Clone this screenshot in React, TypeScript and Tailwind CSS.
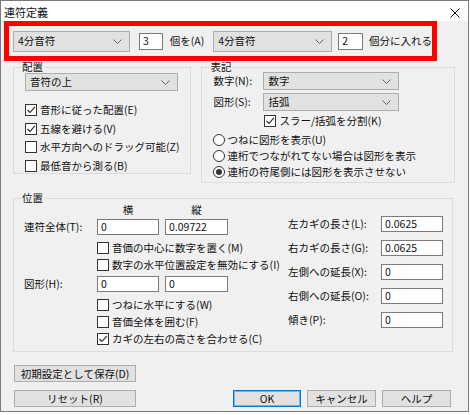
import React from 'react'

const FONT = "font-['Noto_Sans_CJK_JP','Noto_Sans',sans-serif]"

function Chevron() {
  return (
    <svg width="9" height="5" viewBox="0 0 9 5" className="shrink-0">
      <polyline points="0.5,0.5 4.5,4.5 8.5,0.5" fill="none" stroke="#606060" strokeWidth="1" />
    </svg>
  )
}

function Select({ label, w, h = 'h-[18px]' }: { label: string; w: string; h?: string }) {
  return (
    <div className={`${w} ${h} shrink-0 flex items-center justify-between pl-[4px] pr-[7px] bg-[#e1e1e1] border border-[#adadad]`}>
      <span>{label}</span>
      <Chevron />
    </div>
  )
}

function Field({ value, w, ml = '' }: { value: string; w: string; ml?: string }) {
  return (
    <div className={`${w} ${ml} h-[16px] shrink-0 flex items-center pl-[3px] bg-white border border-[#7a7a7a]`}>
      {value}
    </div>
  )
}

function Check({ label, on = false, h = 'h-[18.5px]', ml = '' }: { label: string; on?: boolean; h?: string; ml?: string }) {
  return (
    <div className={`${h} ${ml} flex items-center gap-[3px] whitespace-nowrap`}>
      <div className="w-[12px] h-[12px] shrink-0 bg-white border border-[#333] flex items-center justify-center">
        {on && (
          <svg width="10" height="10" viewBox="0 0 10 10">
            <polyline points="1.5,5 4,7.5 8.8,1.8" fill="none" stroke="#222" strokeWidth="1.1" />
          </svg>
        )}
      </div>
      <span>{label}</span>
    </div>
  )
}

function Radio({ label, on = false }: { label: string; on?: boolean }) {
  return (
    <div className="h-[16px] flex items-center gap-[2px] whitespace-nowrap">
      <div className="w-[12px] h-[12px] shrink-0 rounded-full bg-white border border-[#333] flex items-center justify-center">
        {on && <div className="w-[6px] h-[6px] rounded-full bg-[#333]" />}
      </div>
      <span>{label}</span>
    </div>
  )
}

function Btn({ label, w, ml = '', primary = false }: { label: string; w: string; ml?: string; primary?: boolean }) {
  return (
    <div
      className={`${w} ${ml} h-[17px] shrink-0 flex items-center justify-center bg-[#e1e1e1] border ${
        primary ? 'border-[#0078d7] shadow-[inset_0_0_0_1px_rgba(0,120,215,0.45)]' : 'border-[#adadad]'
      }`}>
      {label}
    </div>
  )
}

export default function App() {
  return (
    <div className={`w-[470px] h-[415px] bg-white text-[#111] text-[10.5px] leading-[12px] ${FONT}`}>
      <div className="w-[469px] h-[412px] border border-[#7a7a7a] bg-[#f0f0f0] flex flex-col">
        {/* title bar */}
        <div className="h-[20px] bg-white flex items-center justify-between pl-[3px] pr-[8px]">
          <span className="mt-[2px] text-[11px]">連符定義</span>
          <svg width="10" height="10" viewBox="0 0 10 10" className="mt-[3px]">
            <path d="M0.5 0.5 L9.5 9.5 M9.5 0.5 L0.5 9.5" stroke="#111" strokeWidth="1" />
          </svg>
        </div>

        {/* top row, highlighted */}
        <div className="ml-[3px] w-[433px] h-[40px] border-[5px] border-[#ff0000] flex items-center">
          <div className="ml-[4px]">
            <Select label="4分音符" w="w-[117px]" h="h-[21px]" />
          </div>
          <div className="ml-[9px] w-[24px] h-[17px] flex items-center pl-[3px] bg-white border border-[#7a7a7a]">3</div>
          <span className="ml-[7px] w-[44px] whitespace-nowrap">個を(A)</span>
          <Select label="4分音符" w="w-[119px]" h="h-[21px]" />
          <div className="ml-[6px] w-[25px] h-[17px] flex items-center pl-[3px] bg-white border border-[#7a7a7a]">2</div>
          <span className="ml-[6px] whitespace-nowrap">個分に入れる</span>
        </div>

        {/* 配置 / 表記 */}
        <div className="ml-[12px] flex items-start">
          <fieldset className="w-[176px] h-[113px] border border-[#dcdcdc] px-[11px]">
            <legend className="ml-[-4px] px-[1px] leading-[12px]">配置</legend>
            <Select label="音符の上" w="w-[153px]" />
            <div className="mt-[10px]">
              <Check label="音形に従った配置(E)" on />
              <Check label="五線を避ける(V)" on />
              <Check label="水平方向へのドラッグ可能(Z)" />
              <Check label="最低音から測る(B)" />
            </div>
          </fieldset>

          <fieldset className="ml-[10px] w-[254px] h-[122px] border border-[#dcdcdc] px-[11px]">
            <legend className="ml-[-4px] px-[1px] leading-[12px]">表記</legend>
            <div className="mt-[-1px] h-[18px] flex items-center">
              <span className="w-[50px] whitespace-nowrap">数字(N):</span>
              <Select label="数字" w="w-[136px]" />
            </div>
            <div className="mt-[3px] h-[18px] flex items-center">
              <span className="w-[50px] whitespace-nowrap">図形(S):</span>
              <Select label="括弧" w="w-[136px]" />
            </div>
            <Check label="スラー/括弧を分割(K)" on h="h-[16px]" ml="mt-[2px] ml-[51px]" />
            <div className="mt-[3px]">
              <Radio label="つねに図形を表示(U)" />
              <Radio label="連桁でつながれてない場合は図形を表示" />
              <Radio label="連桁の符尾側には図形を表示させない" on />
            </div>
          </fieldset>
        </div>

        {/* 位置 */}
        <fieldset className="mt-[9px] ml-[12px] w-[440px] h-[160px] border border-[#dcdcdc] pl-[10px]">
          <legend className="ml-[-3px] px-[1px] leading-[12px]">位置</legend>
          <div className="flex items-start">
            <div className="w-[264px] shrink-0">
              <div className="h-[12px] flex">
                <span className="ml-[73px] w-[62px] text-center">横</span>
                <span className="ml-[6px] w-[63px] text-center">縦</span>
              </div>
              <div className="mt-[3px] flex items-center">
                <span className="w-[73px] whitespace-nowrap">連符全体(T):</span>
                <Field value="0" w="w-[62px]" />
                <Field value="0.09722" w="w-[63px]" ml="ml-[6px]" />
              </div>
              <div className="mt-[4px] ml-[73px]">
                <Check label="音価の中心に数字を置く(M)" h="h-[17px]" />
                <Check label="数字の水平位置設定を無効にする(I)" h="h-[17px]" />
              </div>
              <div className="mt-[3px] flex items-center">
                <span className="w-[73px] whitespace-nowrap">図形(H):</span>
                <Field value="0" w="w-[62px]" />
                <Field value="0" w="w-[63px]" ml="ml-[6px]" />
              </div>
              <div className="mt-[4px] ml-[73px]">
                <Check label="つねに水平にする(W)" h="h-[17px]" />
                <Check label="音価全体を囲む(F)" h="h-[17px]" />
                <Check label="カギの左右の高さを合わせる(C)" on h="h-[17px]" />
              </div>
            </div>

            <div className="mt-[8px] flex flex-col">
              {[
                ['左カギの長さ(L):', '0.0625'],
                ['右カギの長さ(G):', '0.0625'],
                ['左側への延長(X):', '0'],
                ['右側への延長(O):', '0'],
                ['傾き(P):', '0'],
              ].map(([l, v]) => (
                <div key={l} className="h-[24px] flex items-center">
                  <span className="w-[93px] whitespace-nowrap">{l}</span>
                  <Field value={v} w="w-[62px]" />
                </div>
              ))}
            </div>
          </div>
        </fieldset>

        {/* buttons */}
        <div className="mt-[13px] ml-[13px]">
          <Btn label="初期設定として保存(D)" w="w-[122px]" />
        </div>
        <div className="mt-[8px] ml-[13px] flex">
          <Btn label="リセット(R)" w="w-[122px]" />
          <Btn label="OK" w="w-[68px]" ml="ml-[97px]" primary />
          <Btn label="キャンセル" w="w-[69px]" ml="ml-[6px]" />
          <Btn label="ヘルプ" w="w-[69px]" ml="ml-[6px]" />
        </div>
      </div>
    </div>
  )
}
